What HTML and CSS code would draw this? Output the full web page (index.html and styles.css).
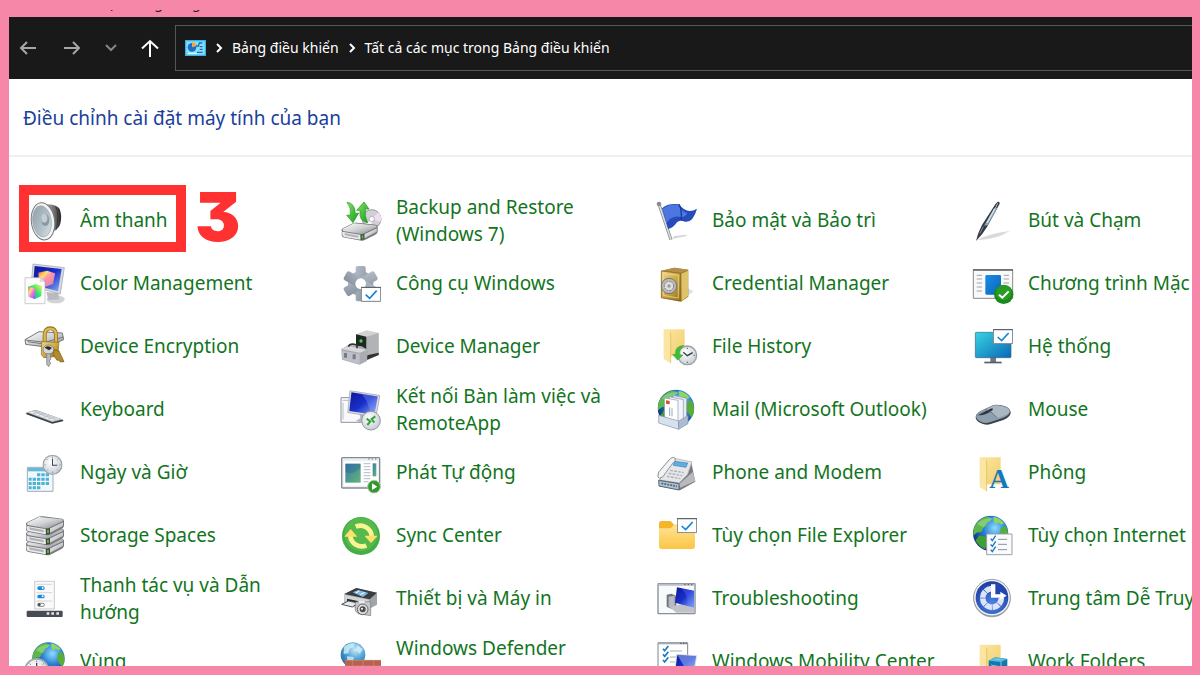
FILE: index.html
```html
<!DOCTYPE html>
<html lang="vi">
<head>
<meta charset="utf-8">
<title>Tất cả các mục trong Bảng điều khiển</title>
<link rel="stylesheet" href="styles.css">
</head>
<body>
<svg class="sprite" aria-hidden="true">
  <defs>
    <linearGradient id="metal" x1="0" y1="0" x2="1" y2="1"><stop offset="0" stop-color="#fff"/><stop offset=".5" stop-color="#d0d1d3"/><stop offset="1" stop-color="#85878b"/></linearGradient>
    <linearGradient id="cone" x1="0" y1="0" x2="1" y2="1"><stop offset="0" stop-color="#8f9ca4"/><stop offset=".6" stop-color="#b4c2ca"/><stop offset="1" stop-color="#dfe8ec"/></linearGradient>
    <linearGradient id="dark" x1="0" y1="0" x2="1" y2="0"><stop offset="0" stop-color="#aaa"/><stop offset=".6" stop-color="#666"/><stop offset="1" stop-color="#2c2c2c"/></linearGradient>
    <linearGradient id="screen" x1="0" y1="0" x2="1" y2="1"><stop offset="0" stop-color="#0d1794"/><stop offset=".5" stop-color="#1a30cc"/><stop offset="1" stop-color="#8fb2f4"/></linearGradient>
    <linearGradient id="gold" x1="0" y1="0" x2="1" y2="1"><stop offset="0" stop-color="#f0d987"/><stop offset=".5" stop-color="#cfa945"/><stop offset="1" stop-color="#947022"/></linearGradient>
    <linearGradient id="folder" x1="0" y1="0" x2="1" y2="1"><stop offset="0" stop-color="#fbe7a4"/><stop offset="1" stop-color="#f0ce68"/></linearGradient>
    <linearGradient id="folderNew" x1="0" y1="0" x2="0" y2="1"><stop offset="0" stop-color="#ffe391"/><stop offset="1" stop-color="#fbc546"/></linearGradient>
    <linearGradient id="aqua" x1="0" y1="0" x2="1" y2="1"><stop offset="0" stop-color="#38d3e2"/><stop offset="1" stop-color="#0a68b8"/></linearGradient>
    <linearGradient id="blue" x1="0" y1="0" x2="1" y2="1"><stop offset="0" stop-color="#1b8fe4"/><stop offset="1" stop-color="#0a62c0"/></linearGradient>
    <linearGradient id="green" x1="0" y1="0" x2="1" y2="1"><stop offset="0" stop-color="#82e860"/><stop offset="1" stop-color="#159a1c"/></linearGradient>
    <linearGradient id="gear" x1="0" y1="0" x2="1" y2="1"><stop offset="0" stop-color="#b4bcc5"/><stop offset="1" stop-color="#8792a0"/></linearGradient>
    <linearGradient id="photo" x1="0" y1="0" x2="1" y2="1"><stop offset="0" stop-color="#3b78a8"/><stop offset="1" stop-color="#62b877"/></linearGradient>
    <linearGradient id="rainbow" x1="0" y1="0" x2="1" y2="1"><stop offset="0" stop-color="#ff5a4a"/><stop offset=".3" stop-color="#ffe070"/><stop offset=".55" stop-color="#ff6fe0"/><stop offset="1" stop-color="#7c50ff"/></linearGradient>
    <linearGradient id="rainbowB" x1="1" y1="0" x2="0" y2="1"><stop offset="0" stop-color="#f8ff60"/><stop offset=".5" stop-color="#28e070"/><stop offset="1" stop-color="#14b4ff"/></linearGradient>
    <radialGradient id="sea" cx=".62" cy=".35" r=".7"><stop offset="0" stop-color="#8fdcff"/><stop offset=".45" stop-color="#2b82d6"/><stop offset="1" stop-color="#0d2b7c"/></radialGradient>
    <radialGradient id="paleSea" cx=".6" cy=".3" r=".8"><stop offset="0" stop-color="#c8ecfa"/><stop offset=".5" stop-color="#4a9fd2"/><stop offset="1" stop-color="#1f5f9c"/></radialGradient>
    <radialGradient id="navy" cx=".5" cy=".7" r=".7"><stop offset="0" stop-color="#4f86e8"/><stop offset="1" stop-color="#1a3aa0"/></radialGradient>
    <radialGradient id="face" cx=".4" cy=".35" r=".7"><stop offset="0" stop-color="#fff"/><stop offset="1" stop-color="#c3ccd3"/></radialGradient>
    <symbol id="globe" viewBox="0 0 100 100">
      <circle cx="50" cy="50" r="49" fill="url(#sea)"/>
      <path d="M8 26Q22 6 42 3L52 8 48 18 38 20 42 28 30 34 24 46 12 48 2 56Q0 38 8 26Z" fill="#5cb848"/>
      <path d="M58 4Q76 8 87 22L80 26 72 20 64 24 58 16Z" fill="#8ed65c"/>
      <path d="M78 34L92 30Q100 44 98 62L92 76 84 66 76 52Z" fill="#57ac3c"/>
      <path d="M18 56L34 58 46 68 40 84 34 94Q16 86 8 70Z" fill="#3f9e36"/>
      <path d="M12 24Q30 4 60 8Q40 18 30 34Z" fill="#fff" opacity=".25"/>
    </symbol>
    <symbol id="clock" viewBox="0 0 60 60">
      <circle cx="30" cy="30" r="28" fill="url(#face)" stroke="#a0a8ae" stroke-width="4"/>
      <path d="M30 6v4M30 50v4M6 30h4M50 30h4M13 13l3 3M47 13l-3 3M13 47l3-3M47 47l-3-3" stroke="#6a737a" stroke-width="2"/>
      <path d="M30 12V31H44" fill="none" stroke="#39444c" stroke-width="3"/>
    </symbol>
    <symbol id="drive" viewBox="0 0 120 60">
      <path d="M4 28Q0 22 8 18L40 2Q46 0 54 1L112 8Q118 10 117 16V30Q116 36 108 40L76 56Q70 59 62 57L10 48Q2 45 3 38Z" fill="#77797d"/>
      <path d="M6 21L42 3 112 10 114 15 72 35Q66 38 58 36L8 27Z" fill="url(#metal)"/>
      <path d="M5 30L60 39Q66 40 66 44V52Q64 55 58 54L12 46Q5 44 5 38Z" fill="#e9eaec"/>
      <path d="M12 34L56 42V49L14 41Z" fill="#b1b3b6"/>
      <path d="M70 40L114 19V30L74 51Q70 52 70 48Z" fill="url(#metal)"/>
      <path d="M62 39L75 36V53L63 56Z" fill="#454545"/><path d="M66 41h6v10h-6z" fill="#49b72e"/>
    </symbol>
    <symbol id="tick" viewBox="0 0 60 46">
      <path d="M1 1H59V44H1Z" fill="#fff" stroke="#7b7f88" stroke-width="3"/><path d="M0 2H60" stroke="#5f646d" stroke-width="4"/>
      <path d="M14 24L26 35 47 12" fill="none" stroke="#1683dc" stroke-width="5"/>
    </symbol>
    <symbol id="openfolder" viewBox="0 0 66 104">
      <path d="M1 1H64V82H22V88L1 78Z" fill="url(#folder)"/><path d="M1 1L22 10V103L1 90Z" fill="#fae6a2"/><path d="M22 10V103" stroke="#ddb852" stroke-width="2"/>
    </symbol>
    <symbol id="pc" viewBox="0 0 90 92">
      <path d="M30 60L62 66 60 76 84 84 50 92 24 82 38 74Z" fill="#b5b8be"/>
      <path d="M8 1L89 14 78 72 2 60Z" fill="#dadde4" stroke="#9da2ad" stroke-width="2"/>
      <path d="M12 5L83 17 74 66 6 56Z" fill="url(#screen)"/><path d="M40 10L83 17 74 66 62 63Q60 34 40 10Z" fill="#9ab0ff" opacity=".3"/>
    </symbol>
  </defs>
</svg>

<div class="caption"><span>Tất cả các mục trong Bảng điều khiển</span></div>

<main class="window">
  <header class="toolbar">
    <nav class="history" aria-label="Điều hướng">
      <button class="nav-button dim" aria-label="Quay lại"><svg viewBox="0 0 20 20"><path d="M18 10H3M9 4L3 10L9 16"/></svg></button>
      <button class="nav-button dim" aria-label="Tiến"><svg viewBox="0 0 20 20"><path d="M2 10H17M11 4L17 10L11 16"/></svg></button>
      <button class="nav-button faint" aria-label="Gần đây"><svg viewBox="0 0 20 20"><path d="M5 7L10 12L15 7"/></svg></button>
      <button class="nav-button" aria-label="Lên"><svg viewBox="0 0 20 20"><path d="M10 19V3M2 10.500L10 3L18 10.500"/></svg></button>
    </nav>
    <nav class="address" aria-label="Đường dẫn">
      <svg class="panel-icon" viewBox="0 0 63 48"><path d="M0 0H63V48H0Z" fill="#39b3e8"/><path d="M4 4H59V44H4Z" fill="#8bddfa"/><circle cx="21" cy="22" r="13" fill="#1671c8"/><path d="M21 22V7A15 15 0 0 1 35 18Z" fill="#f3a83b"/><path d="M33 18L40 18 43 9 52 9M44 20h9M44 28h9M36 37h17" stroke="#176fb8" stroke-width="4" fill="none"/><path d="M10 40h24" stroke="#fff" stroke-width="3"/></svg>
      <svg class="chevron" viewBox="0 0 8 12"><path d="M2 2L6 6L2 10"/></svg>
      <a href="#">Bảng điều khiển</a>
      <svg class="chevron" viewBox="0 0 8 12"><path d="M2 2L6 6L2 10"/></svg>
      <a href="#">Tất cả các mục trong Bảng điều khiển</a>
    </nav>
  </header>

  <h1 class="heading">Điều chỉnh cài đặt máy tính của bạn</h1>

  <div class="items">
    <a class="item marked" href="#">
      <svg viewBox="0 0 120 120"><path d="M64 10Q96 10 104 24Q112 44 106 68Q100 86 78 94Z" fill="url(#dark)"/><path d="M92 16Q104 40 94 86M99 20Q109 44 101 76" stroke="#292929" stroke-width="2" fill="none"/><ellipse cx="54" cy="61" rx="35" ry="56" transform="rotate(-7 54 61)" fill="#f2f3f4" stroke="#74797d" stroke-width="3"/><ellipse cx="51" cy="61" rx="28" ry="47" transform="rotate(-7 51 61)" fill="url(#cone)" stroke="#9aa4aa" stroke-width="2"/><ellipse cx="61" cy="57" rx="12" ry="18" fill="#8998a2"/><ellipse cx="58" cy="52" rx="9" ry="13" fill="#c3ced4"/></svg>
      <span>Âm thanh</span><strong class="step">3</strong>
    </a>
    <a class="item" href="#">
      <svg viewBox="0 0 120 120"><ellipse cx="92" cy="106" rx="27" ry="12" fill="#d2d3d5"/><path d="M64 84L100 88 102 106 70 108Z" fill="#b9bbc0"/><path d="M24 0L118 11 106 90 18 66Z" fill="#d6dae2" stroke="#989eaa" stroke-width="2"/><path d="M29 6L110 15 99 82 24 62Z" fill="url(#screen)"/><path d="M40 26L66 20 90 28 84 60 62 68 42 56Z" fill="url(#rainbow)"/><path d="M64 34L90 28 84 60 62 68Z" fill="#ffb070" opacity=".55"/><path d="M0 41H44L60 54V119H0Z" fill="#fcfcfd" stroke="#b4b7bd" stroke-width="2"/><path d="M44 41V54H60" fill="#ddd"/><path d="M10 68L32 60 51 66 49 96 30 105 11 98Z" fill="url(#rainbowB)"/><path d="M10 68L31 73 30 105 11 98Z" fill="url(#rainbow)"/></svg>
      <span>Color Management</span>
    </a>
    <a class="item" href="#">
      <svg viewBox="0 0 120 120"><path d="M0 38L42 14 112 18 116 38 62 60 2 52Z" fill="url(#metal)" stroke="#77797c" stroke-width="3"/><path d="M1 39L60 46 115 30M8 44L50 50" stroke="#77797c" stroke-width="3" fill="none"/><path d="M59 48V24Q60 4 76 4Q92 4 93 24V48" fill="none" stroke="#93701f" stroke-width="12"/><path d="M59 48V24Q60 5 76 5Q92 5 93 24V48" fill="none" stroke="#d9b950" stroke-width="7"/><path d="M50 44L102 46 98 88 56 92 49 82Z" fill="url(#gold)" stroke="#8b6a1c" stroke-width="2"/><path d="M88 68L102 72 117 104 106 105 100 99 96 100 84 82Z" fill="#b18c2d" stroke="#73550e" stroke-width="2"/><ellipse cx="70" cy="68" rx="16" ry="14" fill="#d6d7d8" stroke="#686868" stroke-width="2"/><path d="M59 62Q70 53 81 63L72 70Z" fill="#2e2b24"/><path d="M65 80H77V98L72 102 77 108 71 119 65 112Z" fill="#b8babd" stroke="#707274" stroke-width="2"/></svg>
      <span>Device Encryption</span>
    </a>
    <a class="item" href="#">
      <svg viewBox="0 0 120 120"><path d="M4 68L32 60 115 90 114 94 82 101 4 73Z" fill="#3d4248"/><path d="M4 67L32 60 114 88 82 96Z" fill="#bcc3ca"/><path d="M12 67L32 62 105 87 82 92Z" fill="#edf0f3"/><path d="M22 64L93 90M28 63L99 88M25 71L44 66M40 76L58 71M55 82L74 77M70 87L88 82" stroke="#aab3bc" stroke-width="2"/></svg>
      <span>Keyboard</span>
    </a>
    <a class="item" href="#">
      <svg viewBox="0 0 120 120"><path d="M7 43H84V115H7Z" fill="#f2f7fa" stroke="#9cadb8" stroke-width="3"/><path d="M9 45H82V55H9Z" fill="#66b8d8"/><g fill="#4ab4d6"><path d="M36 61h10v9H36zM49 61h10v9H49zM62 61h10v9H62zM11 74h9v9h-9zM23 74h10v9H23zM36 74h10v9H36zM49 74h10v9H49zM62 74h10v9H62zM11 87h9v9h-9zM23 87h10v9H23zM36 87h10v9H36zM49 87h10v9H49zM62 87h10v9H62zM11 100h9v9h-9zM23 100h10v9H23zM36 100h10v9H36z"/></g><use href="#clock" x="52" y="5" width="61" height="61"/></svg>
      <span>Ngày và Giờ</span>
    </a>
    <a class="item" href="#">
      <svg viewBox="0 0 120 120"><use href="#drive" x="0" y="60" width="120" height="60"/><use href="#drive" x="0" y="30" width="120" height="60"/><use href="#drive" x="0" y="0" width="120" height="60"/></svg>
      <span>Storage Spaces</span>
    </a>
    <a class="item" href="#">
      <svg viewBox="0 0 120 120"><path d="M29 7H88V90H29Z" fill="#fafafa" stroke="#b2b2b6" stroke-width="2"/><path d="M34 16H82M34 41H82M34 66H82" stroke="#c4c4c4" stroke-width="2"/><rect x="37" y="22" width="22" height="11" rx="5" fill="#168bd4"/><circle cx="53" cy="27" r="3" fill="#fff"/><rect x="37" y="47" width="22" height="11" rx="5" fill="#168bd4"/><circle cx="53" cy="52" r="3" fill="#fff"/><rect x="38" y="73" width="20" height="9" rx="4" fill="#fff" stroke="#555" stroke-width="2"/><circle cx="43" cy="77" r="4" fill="#444"/><rect x="5" y="95" width="108" height="19" rx="3" fill="#474c53"/><path d="M65 100h8v7h-8zM79 100h8v7h-8zM94 100h8v7h-8z" fill="#e6e6e6"/></svg>
      <span>Thanh tác vụ và Dẫn hướng</span>
    </a>
    <a class="item" href="#">
      <svg viewBox="0 0 120 120"><use href="#globe" x="21" y="0" width="99" height="99"/><use href="#clock" x="-3" y="48" width="76" height="76"/></svg>
      <span>Vùng</span>
    </a>

    <a class="item" href="#">
      <svg viewBox="0 0 120 120"><circle cx="92" cy="54" r="28" fill="#d0d1d7" stroke="#93949b" stroke-width="3"/><path d="M92 54L112 34A28 28 0 0 1 119 62Z" fill="#f0dcf4"/><path d="M92 54L72 72A28 28 0 0 0 92 82Z" fill="#f9f9fb"/><circle cx="92" cy="54" r="8" fill="#fff" stroke="#999" stroke-width="2"/><use href="#drive" x="-1" y="64" width="114" height="57"/><path d="M18 4Q42 6 43 38L53 36 36 65 17 43 28 42Q32 20 18 4Z" fill="url(#green)" stroke="#219322" stroke-width="2"/><path d="M69 3L84 24 74 24Q69 44 80 65Q53 62 57 28L47 28Z" fill="url(#green)" stroke="#219322" stroke-width="2"/></svg>
      <span>Backup and Restore (Windows 7)</span>
    </a>
    <a class="item" href="#">
      <svg viewBox="0 0 120 120"><g fill="url(#gear)"><circle cx="59" cy="59" r="38"/><rect x="44" y="6" width="30" height="106" rx="6"/><rect x="44" y="6" width="30" height="106" rx="6" transform="rotate(60 59 59)"/><rect x="44" y="6" width="30" height="106" rx="6" transform="rotate(120 59 59)"/></g><circle cx="59" cy="59" r="16" fill="#fff"/><use href="#tick" x="60" y="68" width="60" height="46"/></svg>
      <span>Công cụ Windows</span>
    </a>
    <a class="item" href="#">
      <svg viewBox="0 0 120 120"><path d="M45 22L77 10 113 17V84L82 99 45 84Z" fill="#d2d2d4"/><path d="M76 29L113 18V84L78 98Z" fill="#b2b3b6"/><path d="M78 85L113 77V84L78 98Z" fill="#313335"/><path d="M45 22L76 29V76L45 66Z" fill="#202823"/><circle cx="60" cy="42" r="5" fill="#48d452"/><path d="M1 66L22 54 62 58 80 68 78 102 56 113 3 98Z" fill="#aaacb2"/><path d="M1 66L22 56 77 69 56 77Z" fill="#d8d9dc"/><path d="M22 59Q28 46 48 55V64" stroke="#333" stroke-width="5" fill="none"/><path d="M9 78h9v14H9zM35 82h9v15h-9z" fill="#45474c"/><path d="M3 71L56 81V111L4 97Z" fill="#eef" opacity=".3"/></svg>
      <span>Device Manager</span>
    </a>
    <a class="item" href="#">
      <svg viewBox="0 0 120 120"><path d="M0 23H60V97H0Z" fill="#f8f9fb" stroke="#8e939e" stroke-width="3"/><path d="M5 31H50M6 38V88" stroke="#b9bdc7" stroke-width="3"/><use href="#pc" x="18" y="1" width="100" height="102"/><circle cx="90" cy="92" r="28" fill="url(#face)" stroke="#92969a" stroke-width="3"/><path d="M77 86L88 94 79 105M103 79L92 87 100 98" fill="none" stroke="#33a13c" stroke-width="6"/></svg>
      <span>Kết nối Bàn làm việc và RemoteApp</span>
    </a>
    <a class="item" href="#">
      <svg viewBox="0 0 120 120"><rect x="2" y="14" width="114" height="91" rx="3" fill="#eceff0" stroke="#858b94" stroke-width="4"/><path d="M8 25H110V98H8Z" fill="#fff"/><path d="M82 18h4M92 18h4M102 18h4" stroke="#666" stroke-width="3"/><path d="M13 32H59V89H13Z" fill="url(#photo)"/><path d="M14 57Q34 68 58 45V32H13Z" fill="#2b6796" opacity=".4"/><path d="M68 32h20M68 41h20M68 50h20M68 59h20M68 68h20M68 77h20M68 86h14" stroke="#c3c7ca" stroke-width="4"/><path d="M95 31H106V70H95Z" fill="url(#photo)"/><circle cx="99" cy="101" r="19" fill="#33972b" stroke="#a9c9a5" stroke-width="3"/><path d="M93 91L109 101 93 111Z" fill="#fff"/></svg>
      <span>Phát Tự động</span>
    </a>
    <a class="item" href="#">
      <svg viewBox="0 0 120 120"><circle cx="60" cy="60" r="57" fill="#43ae43"/><circle cx="60" cy="55" r="50" fill="#6cc757" opacity=".45"/><path d="M44 32A34 34 0 0 1 92 60" fill="none" stroke="#f8f492" stroke-width="14"/><path d="M76 88A34 34 0 0 1 28 60" fill="none" stroke="#f8f492" stroke-width="14"/><path d="M70 59H110L90 81Z" fill="#ffe06c"/><path d="M10 62L29 39 49 62Z" fill="#ffe06c"/></svg>
      <span>Sync Center</span>
    </a>
    <a class="item" href="#">
      <svg viewBox="0 0 120 120"><path d="M10 45L46 27 108 41V77L74 95 10 76Z" fill="#a1a4a8"/><path d="M10 45L46 27 108 41 86 61Z" fill="#393e42"/><path d="M35 40L52 33 82 42 66 54Z" fill="#83bce2"/><path d="M44 42L55 36M58 47L71 40" stroke="#fff" stroke-width="3"/><path d="M10 47L84 62V92L14 77Z" fill="#d2d4d6"/><path d="M18 59L50 66V76L18 69Z" fill="#252729"/><path d="M2 76L22 66 51 72 34 84Z" fill="#e8e9ea" stroke="#555" stroke-width="3"/><path d="M43 69L89 68V110L51 104 43 95Z" fill="#c5c7c9" stroke="#787a7d" stroke-width="2"/><path d="M54 66h17v7H54z" fill="#ececec"/><circle cx="65" cy="91" r="16" fill="#ddd" stroke="#64666a" stroke-width="3"/><circle cx="65" cy="91" r="9" fill="#4c4e52"/><circle cx="63" cy="89" r="3" fill="#fff"/></svg>
      <span>Thiết bị và Máy in</span>
    </a>
    <a class="item" href="#">
      <svg viewBox="0 0 120 120"><circle cx="36" cy="38" r="37" fill="url(#paleSea)"/><path d="M9 15Q25 1 42 5L38 16 26 20 22 34 8 36ZM48 9L66 22 56 35 47 25ZM18 43L38 45 37 62 19 62Z" fill="#d6edf5" opacity=".8"/><path d="M12 54H120V118H12Z" fill="#b8624d"/><path d="M12 55H120M12 72H120M12 90H120M12 106H120M34 54V72M66 54V72M98 54V72M50 72V90M84 72V90M34 90V106" stroke="#cf8d7a" stroke-width="2"/></svg>
      <span>Windows Defender Firewall</span>
    </a>

    <a class="item" href="#">
      <svg viewBox="0 0 120 120"><path d="M46 114L92 104 84 101 50 106Z" fill="#bbb" opacity=".6"/><path d="M7 12L42 116" stroke="#808487" stroke-width="9"/><path d="M7 12L42 116" stroke="#d7dadc" stroke-width="5"/><circle cx="6" cy="9" r="7" fill="#8a8d90"/><path d="M15 22Q32 6 66 10Q90 42 120 23Q108 66 84 62Q67 56 60 64Q46 84 33 83Z" fill="#274bb8"/><path d="M17 24Q34 8 63 12Q80 36 91 36Q84 52 66 47Q42 45 29 66Z" fill="#5a86ee" opacity=".75"/><path d="M66 10Q76 28 72 57" fill="none" stroke="#1a389a" stroke-width="4"/></svg>
      <span>Bảo mật và Bảo trì</span>
    </a>
    <a class="item" href="#">
      <svg viewBox="0 0 120 120"><path d="M90 72L110 82 72 110Z" fill="#ccc" opacity=".6"/><path d="M13 20L52 11 94 17V98L72 113 13 102Z" fill="#a27e2c"/><path d="M13 20L52 11 94 17 71 26Z" fill="#b4914b"/><path d="M13 21L70 28V111L13 101Z" fill="url(#gold)" stroke="#80601a" stroke-width="2"/><path d="M73 29L93 20V96L74 110Z" fill="#dfc36b"/><path d="M19 29L64 34V102L19 94Z" fill="none" stroke="#f1df9b" stroke-width="2"/><circle cx="36" cy="66" r="23" fill="#b9babb" stroke="#75736f" stroke-width="3"/><circle cx="36" cy="66" r="14" fill="#dedede" stroke="#77746c" stroke-width="3" stroke-dasharray="5 3"/><circle cx="36" cy="66" r="5" fill="#999"/></svg>
      <span>Credential Manager</span>
    </a>
    <a class="item" href="#">
      <svg viewBox="0 0 120 120"><use href="#openfolder" x="19" y="6" width="66" height="104"/><circle cx="91" cy="85" r="28" fill="url(#face)" stroke="#989fa5" stroke-width="4"/><path d="M91 62v4M91 104v4M68 85h4M110 85h4" stroke="#555d63" stroke-width="3"/><path d="M79 76L91 86 107 77" fill="none" stroke="#333c43" stroke-width="4"/><path d="M80 55Q52 58 56 82L47 82 62 100 78 84 68 83Q66 68 80 55Z" fill="#40bd35" stroke="#248b1f" stroke-width="1"/></svg>
      <span>File History</span>
    </a>
    <a class="item" href="#">
      <svg viewBox="0 0 120 120"><use href="#globe" x="1" y="-2" width="112" height="112"/><path d="M48 16L89 25V90L50 82Z" fill="#e6eaf1" stroke="#8896ae" stroke-width="2"/><path d="M37 20L79 29V99L39 91Z" fill="#f3f6fa" stroke="#8896ae" stroke-width="2"/><path d="M22 24L63 31V104L23 94Z" fill="#fff" stroke="#8896ae" stroke-width="2"/><path d="M27 31L38 33V43L27 41Z" fill="#e14738"/><path d="M38 52V78M45 55V79" stroke="#98a8bc" stroke-width="3"/><path d="M5 76L65 93V118L5 99Z" fill="#d7e0ed" stroke="#8491a9" stroke-width="2"/><path d="M65 93L93 77V101L65 118Z" fill="#adbcd4" stroke="#8491a9" stroke-width="2"/></svg>
      <span>Mail (Microsoft Outlook)</span>
    </a>
    <a class="item" href="#">
      <svg viewBox="0 0 120 120"><path d="M6 83L44 18 103 29 115 86 69 112 6 100Z" fill="#797b7f"/><path d="M107 57L115 84 70 104 66 94Z" fill="#b9babe"/><path d="M40 20L52 16 105 27 92 64 67 90 8 81Z" fill="#e5e6e9" stroke="#9fa1a5" stroke-width="2"/><path d="M53 25L92 30 87 43 49 37Z" fill="#5caee5" stroke="#437fa5" stroke-width="2"/><path d="M40 52L80 59M35 61L76 68M30 70L70 77" stroke="#aaaeb2" stroke-width="4" stroke-dasharray="8 4"/><path d="M3 66Q3 56 13 48L36 21Q45 9 55 16Q57 25 48 30L27 58Q18 76 7 76Q1 73 3 66Z" fill="#f1f2f3" stroke="#8e9194" stroke-width="3"/><path d="M5 82L66 92V111L6 99Z" fill="#b0c0cb" stroke="#596872" stroke-width="3"/><path d="M13 91L60 100" stroke="#456d86" stroke-width="5" stroke-dasharray="6 3"/></svg>
      <span>Phone and Modem</span>
    </a>
    <a class="item" href="#">
      <svg viewBox="0 0 120 120"><path d="M6 23Q6 15 14 15H38Q43 15 47 22L51 26H108Q114 26 114 33V90H6Z" fill="#f5b52b"/><path d="M6 37H38Q43 37 47 31L50 28H114V91Q114 99 106 99H14Q6 99 6 91Z" fill="url(#folderNew)"/><use href="#tick" x="60" y="6" width="60" height="46"/></svg>
      <span>Tùy chọn File Explorer</span>
    </a>
    <a class="item" href="#">
      <svg viewBox="0 0 120 120"><rect x="3" y="14" width="111" height="90" rx="2" fill="#f9fafb" stroke="#888e97" stroke-width="4"/><path d="M5 17H112" stroke="#b9bec6" stroke-width="6"/><path d="M82 17h4M92 17h4M102 17h4" stroke="#555" stroke-width="3"/><path d="M29 47L43 44 58 51V85L43 89 29 83Z" fill="#72767c"/><path d="M35 53L53 50V83L35 84Z" fill="#b5bbc1"/><path d="M37 84L77 74 112 87V101H58Z" fill="#bfc3c8"/><path d="M60 25L111 35V86L54 71Z" fill="url(#screen)"/><path d="M75 29L111 35V86L91 80Q95 52 75 29Z" fill="#5f7aff" opacity=".35"/></svg>
      <span>Troubleshooting</span>
    </a>
    <a class="item" href="#">
      <svg viewBox="0 0 120 120"><path d="M3 2H92V110H3Z" fill="#fff" stroke="#7e848d" stroke-width="3"/><path d="M3 4H92" stroke="#a4abb5" stroke-width="6"/><path d="M70 4h4M78 4h4M86 4h3" stroke="#444" stroke-width="3"/><path d="M18 20L23 26 34 12M18 37L23 43 34 29M18 54L23 60 34 46" fill="none" stroke="#197ab8" stroke-width="5"/><path d="M38 27H75M38 45H60M38 60H54" stroke="#aab0b8" stroke-width="3"/><path d="M58 36L120 40 112 92 54 80Z" fill="#c9d3e4"/><path d="M61 39L117 43 108 88 56 77Z" fill="url(#screen)"/><path d="M61 39L117 43 109 80 82 74Z" fill="#91aff2" opacity=".6"/></svg>
      <span>Windows Mobility Center</span>
    </a>

    <a class="item" href="#">
      <svg viewBox="0 0 120 120"><path d="M12 117Q48 97 110 90Q72 114 28 116Z" fill="#bbb" opacity=".55"/><path d="M74 2Q81 1 80 8L42 78Q29 100 9 120Q14 96 27 72L67 10Z" fill="#333b44"/><path d="M63 22L73 20 44 73 33 74Z" fill="#8fa5b4"/><path d="M65 24L42 66" stroke="#d7e5ed" stroke-width="4"/><path d="M74 7L66 24" stroke="#b4c0c8" stroke-width="3"/><path d="M31 77L20 98" stroke="#8a9096" stroke-width="3"/></svg>
      <span>Bút và Chạm</span>
    </a>
    <a class="item" href="#">
      <svg viewBox="0 0 120 120"><path d="M1 17H119V103H1Z" fill="#f9f9f9" stroke="#888" stroke-width="3"/><path d="M0 18H120" stroke="#5e6266" stroke-width="5"/><path d="M11 34H27M11 45H27M11 57H27M11 69H27M11 81H27M92 34H108M92 45H108M92 57H108" stroke="#a1a4a8" stroke-width="3"/><rect x="37" y="33" width="47" height="59" rx="4" fill="url(#blue)"/><circle cx="92" cy="91" r="29" fill="#198a1d"/><circle cx="92" cy="86" r="23" fill="#36a72b" opacity=".6"/><path d="M78 92L88 101 107 82" fill="none" stroke="#fff" stroke-width="6"/></svg>
      <span>Chương trình Mặc</span>
    </a>
    <a class="item" href="#">
      <svg viewBox="0 0 120 120"><path d="M52 90H69V108H52Z" fill="#6f7881"/><path d="M34 104H86V109H34Z" fill="#565d65"/><rect x="7" y="16" width="107" height="76" rx="3" fill="url(#aqua)" stroke="#38677b" stroke-width="2"/><use href="#tick" x="60" y="6" width="60" height="46"/></svg>
      <span>Hệ thống</span>
    </a>
    <a class="item" href="#">
      <svg viewBox="0 0 120 120"><path d="M8 82Q8 70 28 61L57 47Q68 42 84 46Q111 51 113 66Q115 80 91 90L51 103Q38 107 24 100Q8 93 8 82Z" fill="#3a424a"/><path d="M9 79Q11 69 30 60L57 47Q70 42 87 48Q111 53 111 64Q110 76 89 84L51 97Q36 102 23 95Q10 89 9 79Z" fill="#8d9eae"/><path d="M40 59Q59 67 72 84L89 78Q110 72 109 62Q105 52 84 48Q70 44 58 49Z" fill="#aab8c4"/><path d="M14 76L51 57Q62 52 59 60Q46 72 24 76Z" fill="#2c343c"/><path d="M37 58Q59 66 73 84" fill="none" stroke="#4c5b68" stroke-width="2"/></svg>
      <span>Mouse</span>
    </a>
    <a class="item" href="#">
      <svg viewBox="0 0 120 120"><use href="#openfolder" x="19" y="12" width="66" height="104"/><text class="font-glyph" x="49" y="106">A</text></svg>
      <span>Phông</span>
    </a>
    <a class="item" href="#">
      <svg viewBox="0 0 120 120"><use href="#globe" x="-1" y="-2" width="108" height="108"/><path d="M41 54H117V116H41Z" fill="#fafbfd" stroke="#9a9fa7" stroke-width="3"/><path d="M53 68L58 74 68 59M53 85L58 91 68 76M53 101L58 107 68 92" fill="none" stroke="#1979b5" stroke-width="4"/><path d="M75 70H102M75 85H102M75 101H102" stroke="#8d929a" stroke-width="3"/></svg>
      <span>Tùy chọn Internet</span>
    </a>
    <a class="item" href="#">
      <svg viewBox="0 0 120 120"><circle cx="57" cy="59" r="56" fill="#aaa"/><circle cx="57" cy="56" r="55" fill="#eceef4" stroke="#777d8a" stroke-width="2"/><circle cx="57" cy="56" r="49" fill="url(#navy)"/><circle cx="57" cy="57" r="28" fill="none" stroke="#dce5f8" stroke-width="17" stroke-dasharray="20 2"/><path d="M57 56V10A46 46 0 0 1 103 56Z" fill="#2346ae"/><path d="M54 16H67V46H82V38L101 50 82 62V56H54Z" fill="#fff"/></svg>
      <span>Trung tâm Dễ Truy</span>
    </a>
    <a class="item" href="#">
      <svg viewBox="0 0 120 120"><use href="#openfolder" x="19" y="7" width="66" height="104"/><path d="M47 56L66 46 103 51V92L84 100 47 88Z" fill="#1676ae"/><path d="M47 56L66 46 103 51 84 60Z" fill="#55b9dc"/><path d="M84 60V99M54 69L78 74M64 50L86 55" stroke="#7ccae8" stroke-width="3"/></svg>
      <span>Work Folders</span>
    </a>
  </div>
</main>
</body>
</html>
```

FILE: styles.css
```css
* {
  box-sizing: border-box;
}

body {
  margin: 0;
  height: 100vh;
  padding: 0 8px 9px 9px;
  display: flex;
  flex-direction: column;
  overflow: hidden;
  background: #f687a8;
  font-family: "Noto Sans", "Open Sans", sans-serif;
}

a {
  color: inherit;
  text-decoration: none;
}

.sprite {
  position: absolute;
  width: 0;
  height: 0;
}

/* Only the descenders of the window caption stay in view. */
.caption {
  flex: none;
  display: flex;
  align-items: flex-end;
  height: 2px;
  margin: 10px 0 5px 19px;
  overflow: hidden;
  color: #1c1c1c;
  font-size: 14px;
  line-height: 18px;
}

.window {
  flex: 1;
  min-height: 0;
  overflow: hidden;
  background: #fff;
}

.toolbar {
  display: flex;
  align-items: center;
  height: 62px;
  background: #191919;
  color: #fff;
}

.history {
  display: flex;
  flex: none;
  width: 166px;
  padding-left: 9px;
  gap: 19px;
}

.nav-button {
  width: 20px;
  height: 20px;
  padding: 0;
  border: 0;
  background: none;
  color: #fff;
}

.nav-button:first-child {
  margin-right: 5px;
}

.nav-button svg {
  display: block;
  width: 20px;
  height: 20px;
  fill: none;
  stroke: currentColor;
  stroke-width: 2;
}

.dim {
  color: #a6a6a6;
}

.faint {
  color: #858585;
}

.address {
  display: flex;
  align-items: center;
  flex: 1;
  height: 46px;
  padding-left: 9px;
  gap: 9px;
  border: 1px solid #555;
  border-right: 0;
  font-size: 14px;
  line-height: 20px;
  white-space: nowrap;
}

.panel-icon {
  width: 21px;
  height: 16px;
}

.chevron {
  width: 8px;
  height: 12px;
  fill: none;
  stroke: #fff;
  stroke-width: 2;
}

.heading {
  margin: 0;
  padding: 25px 14px 23px;
  border-bottom: 2px solid #edf1f1;
  color: #1a409c;
  font-size: 19px;
  font-weight: 400;
  line-height: 28px;
}

.items {
  display: grid;
  grid-template-columns: repeat(4, minmax(316px, 1fr));
  grid-template-rows: repeat(8, 63px);
  grid-auto-flow: column;
  padding: 32px 0 0 16px;
}

.item {
  position: relative;
  display: flex;
  align-items: center;
  gap: 15px;
  padding-right: 20px;
  color: #12751d;
  font-size: 19px;
  line-height: 27px;
}

.item svg {
  flex: none;
  width: 40px;
  height: 40px;
  overflow: visible;
}

.font-glyph {
  fill: #1678be;
  font: bold 82px "Liberation Serif", serif;
}

.marked::after {
  content: "";
  box-sizing: border-box;
  position: absolute;
  top: -4px;
  left: -6px;
  width: 167px;
  height: 67px;
  border: 10px solid #ff3131;
}

.step {
  position: absolute;
  top: -7px;
  left: 170px;
  color: #ff3131;
  font-family: Inter, sans-serif;
  font-size: 68px;
  font-weight: 900;
  font-feature-settings: "cv09";
  line-height: 68px;
}
```
